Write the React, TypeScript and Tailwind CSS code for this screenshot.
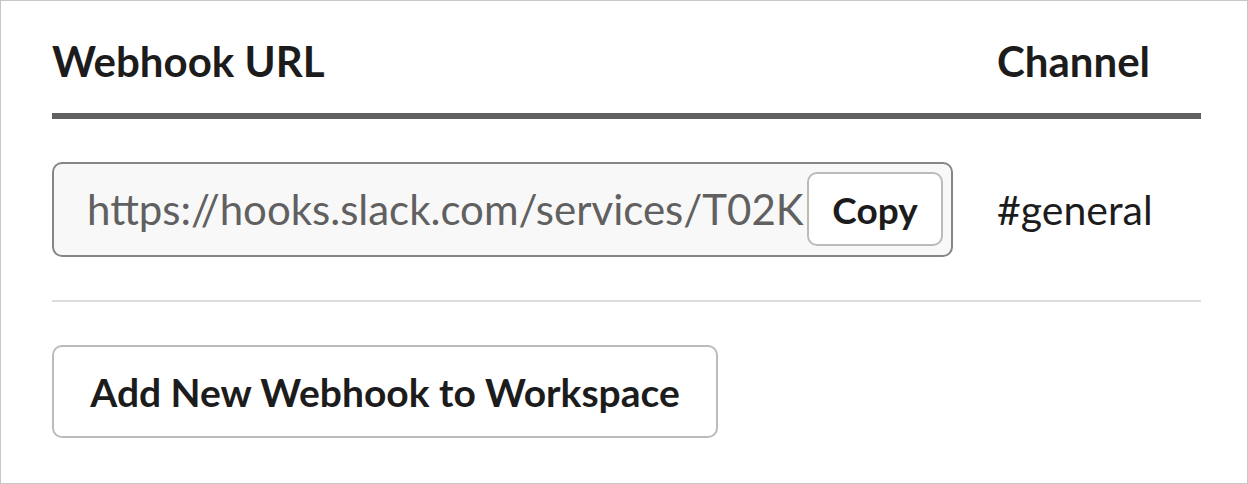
import React from "react";

export default function App() {
  return (
    <div
      className="w-[1248px] h-[484px] border border-[#c6c6c6] bg-white pl-[51px] pr-[46px] box-border"
      style={{ fontFamily: "Lato, 'Noto Sans', sans-serif" }}
    >
      <div className="flex border-b-[6px] border-[#616061] pt-[35px] pb-[27px] text-[42px] font-bold leading-[1.2] text-[#1d1c1d]">
        <div className="w-[945px]">Webhook URL</div>
        <div>Channel</div>
      </div>
      <div className="flex items-center border-b-2 border-[#dddddd] pt-[43px] pb-[43px]">
        <div className="w-[945px]">
          <div className="relative w-[901px] h-[95px] rounded-[10px] border-2 border-[#868686] bg-[#f8f8f8] overflow-hidden">
            <div className="absolute left-[33px] top-0 w-[722px] h-full flex items-center overflow-hidden whitespace-nowrap text-[42px] text-[#616061]">
              https://hooks.slack.com/services/T02KL
            </div>
            <button className="absolute left-[753px] top-[8px] w-[136px] h-[74px] rounded-[10px] border-2 border-[#bbbbbb] bg-white text-[37px] font-bold text-[#1d1c1d] flex items-center justify-center">
              Copy
            </button>
          </div>
        </div>
        <div className="text-[41px] text-[#1d1c1d]">#general</div>
      </div>
      <div className="pt-[43px]">
        <button className="w-[666px] h-[93px] rounded-[10px] border-2 border-[#bbbbbb] bg-white text-[39px] font-bold text-[#1d1c1d] flex items-center justify-center">
          Add New Webhook to Workspace
        </button>
      </div>
    </div>
  );
}
